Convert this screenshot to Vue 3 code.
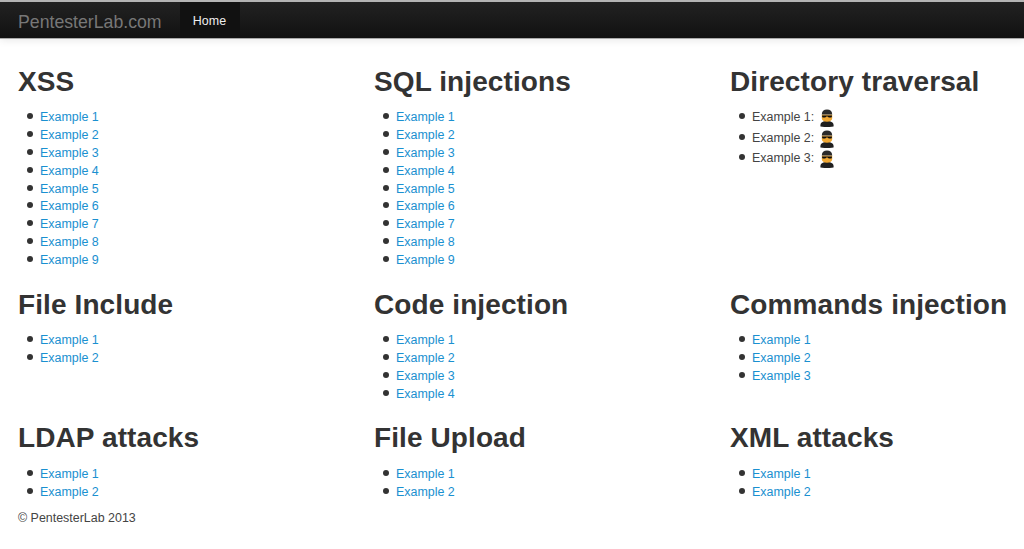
<template>
  <div class="page">
    <div class="navbar">
      <a class="brand">PentesterLab.com</a>
      <a class="nav-item">Home</a>
    </div>
    <div class="container">
      <div v-for="section in sections" :key="section.title" class="section">
        <h2>{{ section.title }}</h2>
        <ul :class="{ plain: section.plain }">
          <li v-for="n in section.count" :key="n">
            <span v-if="section.plain">Example {{ n }}:</span>
            <svg v-if="section.plain" class="hacker" width="16" height="18" viewBox="0 0 16 18">
              <!-- body -->
              <path d="M1.500 17.600c-.6-3.600 1.400-5.600 6.500-5.600s7.100 2 6.500 5.600c-3 .6-10 .6-13 0z" fill="#1f1f1f" />
              <!-- face -->
              <path d="M2.800 5.400h10.400v3.800c0 2.200-2.200 3.600-5.200 3.600s-5.200-1.400-5.200-3.600z" fill="#f0a834" />
              <!-- cap -->
              <path d="M2.800 5.400C2.800 2.200 4.800.4 8 .4s5.200 1.800 5.200 5z" fill="#2a2a2a" />
              <!-- sunglasses -->
              <path d="M3 6.400h10v.8l-.6 1.400h-2.600L8.600 7.400H7.400L6.200 8.600H3.600L3 7.200z" fill="#0e0e0e" />
            </svg>
            <a v-if="!section.plain">Example {{ n }}</a>
          </li>
        </ul>
      </div>
    </div>
    <footer>© PentesterLab 2013</footer>
  </div>
</template>

<script setup>
const sections = [
  { title: "XSS", count: 9 },
  { title: "SQL injections", count: 9 },
  { title: "Directory traversal", count: 3, plain: true },
  { title: "File Include", count: 2 },
  { title: "Code injection", count: 4 },
  { title: "Commands injection", count: 3 },
  { title: "LDAP attacks", count: 2 },
  { title: "File Upload", count: 2 },
  { title: "XML attacks", count: 2 },
];
</script>

<style>
body {
  margin: 0;
  background: #fff;
}
</style>

<style scoped>
.page {
  font-family: "Liberation Sans", Arial, sans-serif;
  font-size: 12.45px;
  line-height: 17.8px;
  color: #444;
}

.navbar {
  height: 36px;
  display: flex;
  align-items: stretch;
  padding-left: 18px;
  background: linear-gradient(to bottom, #222, #111);
  border-top: 2px solid #b4b4b4;
  border-bottom: 1px solid #aaa;
  box-shadow: 0 1px 8px rgba(0, 0, 0, 0.1);
}

.brand {
  font-size: 17.7px;
  line-height: 40px;
  color: #777;
  padding-right: 18px;
}

.nav-item {
  width: 60px;
  text-align: center;
  line-height: 38px;
  color: #eee;
  background: #111;
  letter-spacing: 0.1px;
}

.container {
  display: grid;
  grid-template-columns: 356px 356px 1fr;
  padding: 8px 0 0 18px;
  box-sizing: border-box;
}

h2 {
  margin: 17px 0 9.9px;
  font-size: 28px;
  line-height: 35.6px;
  font-weight: bold;
  letter-spacing: 0.1px;
  color: #333;
  white-space: nowrap;
}

ul {
  margin: 0 0 0 22px;
  padding: 0;
  list-style: none;
}

ul.plain {
  margin-top: -2px;
}

ul.plain li {
  line-height: 20.4px;
}

li::before {
  content: "";
  display: inline-block;
  width: 6px;
  height: 6px;
  margin: 0 7px 2px -13px;
  border-radius: 50%;
  background: #333;
}

li a {
  color: #1a90d0;
}

.hacker {
  vertical-align: middle;
  margin-left: 5px;
}

footer {
  margin: 9px 0 0 18px;
}
</style>
